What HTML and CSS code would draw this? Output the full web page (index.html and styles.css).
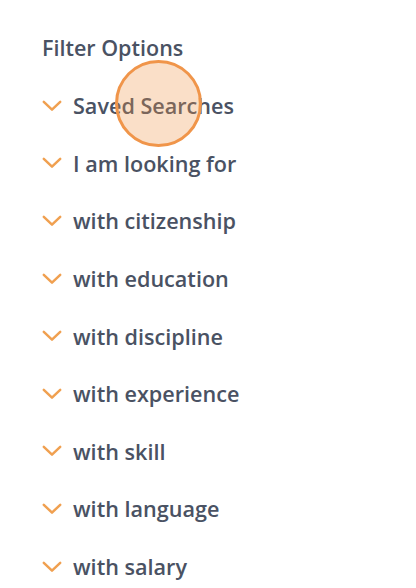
FILE: index.html
```html
<!DOCTYPE html>
<html>
<head>
<meta charset="utf-8">
<link rel="stylesheet" href="styles.css">
</head>
<body>
<div class="panel">
  <h2 class="title">Filter Options</h2>
  <ul class="list">
    <li class="item"><svg class="chev" viewBox="0 0 20 12"><path d="M1.8 1.8 L10 9.6 L18.2 1.8"/></svg><span>Saved Searches</span><span class="touch"></span></li>
    <li class="item"><svg class="chev" viewBox="0 0 20 12"><path d="M1.8 1.8 L10 9.6 L18.2 1.8"/></svg><span>I am looking for</span></li>
    <li class="item"><svg class="chev" viewBox="0 0 20 12"><path d="M1.8 1.8 L10 9.6 L18.2 1.8"/></svg><span>with citizenship</span></li>
    <li class="item"><svg class="chev" viewBox="0 0 20 12"><path d="M1.8 1.8 L10 9.6 L18.2 1.8"/></svg><span>with education</span></li>
    <li class="item"><svg class="chev" viewBox="0 0 20 12"><path d="M1.8 1.8 L10 9.6 L18.2 1.8"/></svg><span>with discipline</span></li>
    <li class="item"><svg class="chev" viewBox="0 0 20 12"><path d="M1.8 1.8 L10 9.6 L18.2 1.8"/></svg><span>with experience</span></li>
    <li class="item"><svg class="chev" viewBox="0 0 20 12"><path d="M1.8 1.8 L10 9.6 L18.2 1.8"/></svg><span>with skill</span></li>
    <li class="item"><svg class="chev" viewBox="0 0 20 12"><path d="M1.8 1.8 L10 9.6 L18.2 1.8"/></svg><span>with language</span></li>
    <li class="item"><svg class="chev" viewBox="0 0 20 12"><path d="M1.8 1.8 L10 9.6 L18.2 1.8"/></svg><span>with salary</span></li>
  </ul>
</div>
</body>
</html>
```
FILE: styles.css
```css
html, body {
  margin: 0;
  padding: 0;
  background: #ffffff;
  overflow: hidden;
}
.panel {
  padding: 33px 0 0 42px;
  font-family: "Open Sans", sans-serif;
  color: #4a5263;
}
.title {
  margin: 0 0 14px 0;
  font-size: 21.5px;
  font-weight: 600;
  line-height: 30px;
}
.list {
  list-style: none;
  margin: 0;
  padding: 0;
}
.item {
  position: relative;
  display: flex;
  align-items: center;
  gap: 11px;
  height: 57.6px;
  font-size: 21.6px;
  font-weight: 600;
}
.chev {
  flex: none;
  width: 20px;
  height: 12px;
  fill: none;
  stroke: #f0a050;
  stroke-width: 2.5;
  stroke-linecap: round;
  stroke-linejoin: round;
}
.touch {
  position: absolute;
  box-sizing: border-box;
  left: 73px;
  top: -17px;
  width: 87px;
  height: 87px;
  border-radius: 50%;
  border: 3.5px solid #f0954a;
  background: rgba(240, 150, 74, 0.3);
}
```
